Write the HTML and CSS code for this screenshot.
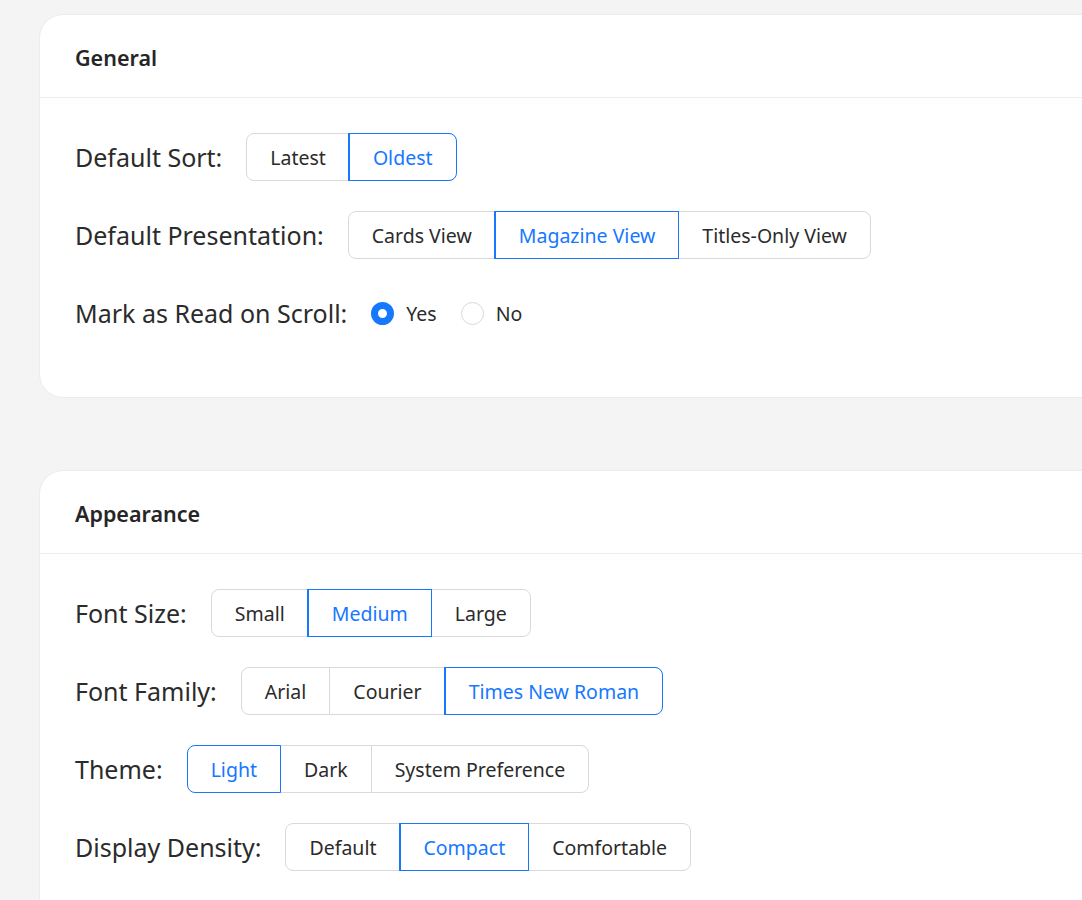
FILE: index.html
```html
<!DOCTYPE html>
<html lang="en">
<head>
<meta charset="utf-8">
<title>Settings</title>
<link rel="stylesheet" href="styles.css">
</head>
<body>
<main class="page">
  <section class="card">
    <header class="card-head"><h2 class="card-title">General</h2></header>
    <div class="card-body">
      <div class="row">
        <span class="label">Default Sort:</span>
        <div class="seg">
          <span class="seg-btn">Latest</span>
          <span class="seg-btn is-on">Oldest</span>
        </div>
      </div>
      <div class="row">
        <span class="label">Default Presentation:</span>
        <div class="seg">
          <span class="seg-btn">Cards View</span>
          <span class="seg-btn is-on">Magazine View</span>
          <span class="seg-btn">Titles-Only View</span>
        </div>
      </div>
      <div class="row">
        <span class="label">Mark as Read on Scroll:</span>
        <div class="radios">
          <span class="radio is-on"><span class="radio-dot"></span>Yes</span>
          <span class="radio"><span class="radio-dot"></span>No</span>
        </div>
      </div>
    </div>
  </section>

  <section class="card">
    <header class="card-head"><h2 class="card-title">Appearance</h2></header>
    <div class="card-body">
      <div class="row">
        <span class="label">Font Size:</span>
        <div class="seg">
          <span class="seg-btn">Small</span>
          <span class="seg-btn is-on">Medium</span>
          <span class="seg-btn">Large</span>
        </div>
      </div>
      <div class="row">
        <span class="label">Font Family:</span>
        <div class="seg">
          <span class="seg-btn">Arial</span>
          <span class="seg-btn">Courier</span>
          <span class="seg-btn is-on">Times New Roman</span>
        </div>
      </div>
      <div class="row">
        <span class="label">Theme:</span>
        <div class="seg">
          <span class="seg-btn is-on">Light</span>
          <span class="seg-btn">Dark</span>
          <span class="seg-btn">System Preference</span>
        </div>
      </div>
      <div class="row">
        <span class="label">Display Density:</span>
        <div class="seg">
          <span class="seg-btn">Default</span>
          <span class="seg-btn is-on">Compact</span>
          <span class="seg-btn">Comfortable</span>
        </div>
      </div>
    </div>
  </section>
</main>
</body>
</html>
```

FILE: styles.css
```css
html, body {
  margin: 0;
  padding: 0;
  overflow: hidden;
  background: #f4f4f4;
}
body {
  font-family: "Noto Sans", "Open Sans", sans-serif;
  color: #262626;
}
.page {
  padding: 14px 0 0 39px;
  width: 1120px;
}
.card {
  background: #fff;
  border: 1px solid #ececec;
  border-radius: 24px;
  margin-bottom: 72px;
}
.card-head {
  height: 83px;
  display: flex;
  align-items: center;
  padding: 2px 35px 0;
  box-sizing: border-box;
  border-bottom: 1px solid #ececec;
}
.card-title {
  margin: 0;
  font-size: 21.5px;
  font-weight: 600;
  color: #262626;
}
.card-body {
  padding: 35px 35px 60px;
  display: flex;
  flex-direction: column;
  gap: 30px;
}
.row {
  display: flex;
  align-items: center;
  height: 48px;
  gap: 24px;
}
.label {
  font-size: 25px;
  color: #2b2b2b;
}
.seg {
  display: flex;
}
.seg-btn {
  height: 46px;
  line-height: 47px;
  padding: 0 23px;
  font-size: 19.5px;
  border: 1px solid #d9d9d9;
  margin-left: -1px;
  background: #fff;
  color: #2b2b2b;
  position: relative;
}
.seg-btn:first-child {
  margin-left: 0;
  border-radius: 8px 0 0 8px;
}
.seg-btn:last-child {
  border-radius: 0 8px 8px 0;
}
.seg-btn.is-on {
  border-color: #1677ff;
  color: #1677ff;
  z-index: 1;
}
.seg-btn.is-on:not(:first-child) {
  box-shadow: -1px 0 0 #1677ff;
}
.radios {
  display: flex;
  gap: 24px;
}
.radio {
  display: flex;
  align-items: center;
  gap: 12px;
  font-size: 19.5px;
  color: #2b2b2b;
}
.radio-dot {
  width: 23px;
  height: 23px;
  border-radius: 50%;
  border: 1px solid #d9d9d9;
  box-sizing: border-box;
  background: #fff;
}
.radio.is-on .radio-dot {
  border: 7px solid #1677ff;
}
```
